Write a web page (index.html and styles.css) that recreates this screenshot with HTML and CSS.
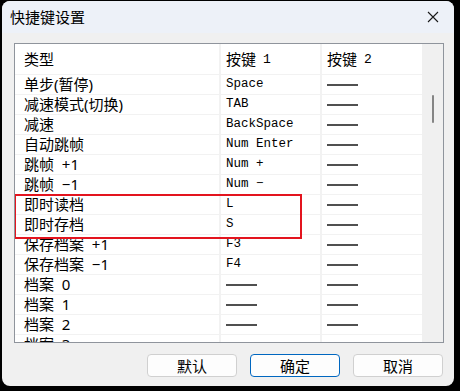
FILE: index.html
```html
<!DOCTYPE html>
<html>
<head>
  <meta charset="utf-8">
  <link rel="stylesheet" href="styles.css">
</head>
<body>
  <div class="window">
    <div class="titlebar">
      <span class="title">快捷键设置</span>
      <svg class="close" width="12" height="12" viewBox="0 0 12 12">
        <path d="M1 1 L11 11 M11 1 L1 11" stroke="#1a1a1a" stroke-width="1.1" fill="none"/>
      </svg>
    </div>

    <div class="listbox">
      <div class="table">
        <div class="cell name head">类型</div>
        <div class="cell head">按键 <span class="num">1</span></div>
        <div class="cell head">按键 <span class="num">2</span></div>

        <div class="cell name">单步(暂停)</div>
        <div class="cell key">Space</div>
        <div class="cell"><span class="dash"></span></div>

        <div class="cell name">减速模式(切换)</div>
        <div class="cell key">TAB</div>
        <div class="cell"><span class="dash"></span></div>

        <div class="cell name">减速</div>
        <div class="cell key">BackSpace</div>
        <div class="cell"><span class="dash"></span></div>

        <div class="cell name">自动跳帧</div>
        <div class="cell key">Num Enter</div>
        <div class="cell"><span class="dash"></span></div>

        <div class="cell name">跳帧  +1</div>
        <div class="cell key">Num +</div>
        <div class="cell"><span class="dash"></span></div>

        <div class="cell name">跳帧  −1</div>
        <div class="cell key">Num −</div>
        <div class="cell"><span class="dash"></span></div>

        <div class="cell name">即时读档</div>
        <div class="cell key">L</div>
        <div class="cell"><span class="dash"></span></div>

        <div class="cell name">即时存档</div>
        <div class="cell key">S</div>
        <div class="cell"><span class="dash"></span></div>

        <div class="cell name">保存档案  +1</div>
        <div class="cell key">F3</div>
        <div class="cell"><span class="dash"></span></div>

        <div class="cell name">保存档案  −1</div>
        <div class="cell key">F4</div>
        <div class="cell"><span class="dash"></span></div>

        <div class="cell name">档案  0</div>
        <div class="cell"><span class="dash"></span></div>
        <div class="cell"><span class="dash"></span></div>

        <div class="cell name">档案  1</div>
        <div class="cell"><span class="dash"></span></div>
        <div class="cell"><span class="dash"></span></div>

        <div class="cell name">档案  2</div>
        <div class="cell"><span class="dash"></span></div>
        <div class="cell"><span class="dash"></span></div>

        <div class="cell name">档案  3</div>
        <div class="cell"><span class="dash"></span></div>
        <div class="cell"><span class="dash"></span></div>
      </div>

      <div class="scrollbar">
        <div class="thumb"></div>
      </div>

      <div class="highlight"></div>
    </div>

    <div class="buttons">
      <button class="btn">默认</button>
      <button class="btn primary">确定</button>
      <button class="btn">取消</button>
    </div>
  </div>
</body>
</html>
```

FILE: styles.css
```css
* {
  margin: 0;
  padding: 0;
  box-sizing: border-box;
}

body {
  background: #000;
  font-family: "Noto Sans", "Noto Sans CJK SC", sans-serif;
  color: #000;
}

.window {
  margin: 1px 0 0 2px;
  width: 452px;
  height: 385px;
  border-radius: 8px;
  overflow: hidden;
  background: #f0f0f0;
}

.titlebar {
  height: 32px;
  display: flex;
  align-items: center;
  justify-content: space-between;
  padding: 0 15px 0 8px;
  background: #edf1f8;
}

.title {
  font-size: 15px;
  line-height: 1;
}

/* list box with fixed columns */
.listbox {
  position: relative;
  display: flex;
  margin: 10px 0 0 12px;
  width: 430px;
  height: 300px;
  border: 1px solid #8f949c;
  background: #f0f0f0;
  overflow: hidden;
}

.table {
  display: grid;
  grid-template-columns: 204px 99px 100px;
  grid-template-rows: 30px;
  grid-auto-rows: 19px;
  column-gap: 2px;
  row-gap: 1px;
  background: #f2f2f2;
  align-content: start;
}

.cell {
  background: #fff;
  display: flex;
  align-items: center;
  padding-left: 5px;
  font-size: 15px;
  line-height: 1;
  white-space: pre;
  overflow: hidden;
}

.cell.name {
  padding-left: 9px;
}

.cell.head .num {
  font-family: "Liberation Mono", monospace;
  font-size: 13px;
  margin-left: 3px;
}

.cell.key {
  font-family: "Liberation Mono", monospace;
  font-size: 12.5px;
}

.dash {
  display: inline-block;
  width: 31px;
  height: 2px;
  background: #505050;
}

.scrollbar {
  width: 21px;
  background: #f0f0f0;
}

.thumb {
  margin: 51px 0 0 10px;
  width: 2px;
  height: 28px;
  background: #858585;
  border-radius: 1px;
}

.highlight {
  position: absolute;
  left: -1px;
  top: 150px;
  width: 288px;
  height: 45px;
  border: 2px solid #e3141e;
}

.buttons {
  display: flex;
  justify-content: flex-end;
  gap: 13px;
  margin-top: 11px;
  padding-right: 11px;
}

.btn {
  width: 90px;
  height: 23px;
  border: 1px solid #d0d0d0;
  border-radius: 4px;
  background: #fdfdfd;
  font-family: "Noto Sans CJK SC", sans-serif;
  font-size: 15px;
  line-height: 1;
  color: #000;
}

.btn.primary {
  border-color: #0067c0;
}
```
